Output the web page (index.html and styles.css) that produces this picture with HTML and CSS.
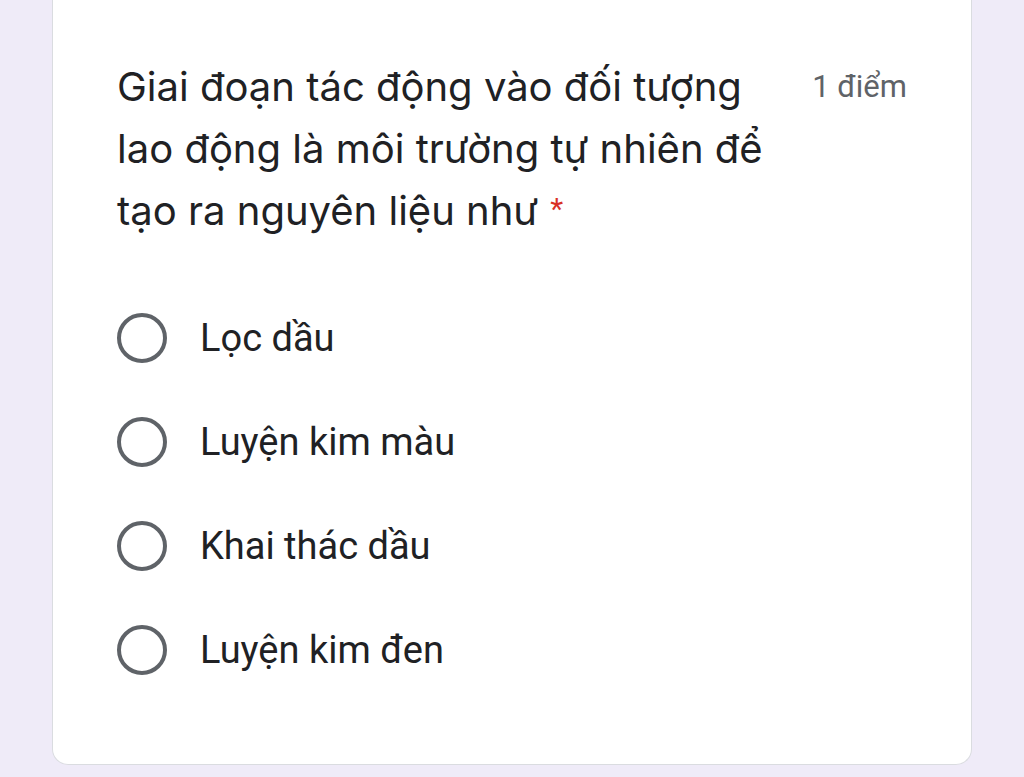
FILE: index.html
```html
<!DOCTYPE html>
<html lang="vi">
<head>
<meta charset="utf-8">
<link rel="stylesheet" href="styles.css">
</head>
<body>
<div class="card">
  <div class="header">
    <div class="question">Giai đoạn tác động vào đối tượng lao động là môi trường tự nhiên để tạo ra nguyên liệu như<span class="req">*</span></div>
    <div class="points">1 điểm</div>
  </div>
  <div class="options">
    <div class="option"><span class="radio"></span><span class="label">Lọc dầu</span></div>
    <div class="option"><span class="radio"></span><span class="label">Luyện kim màu</span></div>
    <div class="option"><span class="radio"></span><span class="label">Khai thác dầu</span></div>
    <div class="option"><span class="radio"></span><span class="label">Luyện kim đen</span></div>
  </div>
</div>
</body>
</html>
```
FILE: styles.css
```css
html, body {
  margin: 0;
  padding: 0;
  background: #efebf8;
  height: 777px;
  overflow: hidden;
}
body {
  padding-left: 52px;
  font-family: Roboto, "Noto Sans", sans-serif;
}
.card {
  box-sizing: border-box;
  width: 920px;
  height: 765px;
  background: #fff;
  border: 1px solid #dadce0;
  border-top: none;
  border-radius: 0 0 16px 16px;
  padding: 56px 64px 0 64px;
}
.header {
  display: flex;
  justify-content: space-between;
  align-items: flex-start;
}
.question {
  width: 662px;
  font-family: Inter, "Noto Sans", sans-serif;
  font-size: 40px;
  line-height: 62px;
  color: #202124;
  letter-spacing: 0;
}
.req {
  display: inline-block;
  margin-left: 12px;
  font-family: Roboto, sans-serif;
  font-size: 30px;
  line-height: 30px;
  vertical-align: 6px;
  color: #d93025;
}
.points {
  font-size: 31px;
  line-height: 62px;
  color: #5f6368;
}
.options {
  display: flex;
  flex-direction: column;
  margin-top: 44px;
}
.option {
  display: flex;
  align-items: center;
  height: 104px;
}
.radio {
  box-sizing: border-box;
  width: 50px;
  height: 50px;
  border: 4px solid #5f6368;
  border-radius: 50%;
  flex: none;
}
.label {
  margin-left: 33px;
  font-size: 38px;
  color: #202124;
}
```
